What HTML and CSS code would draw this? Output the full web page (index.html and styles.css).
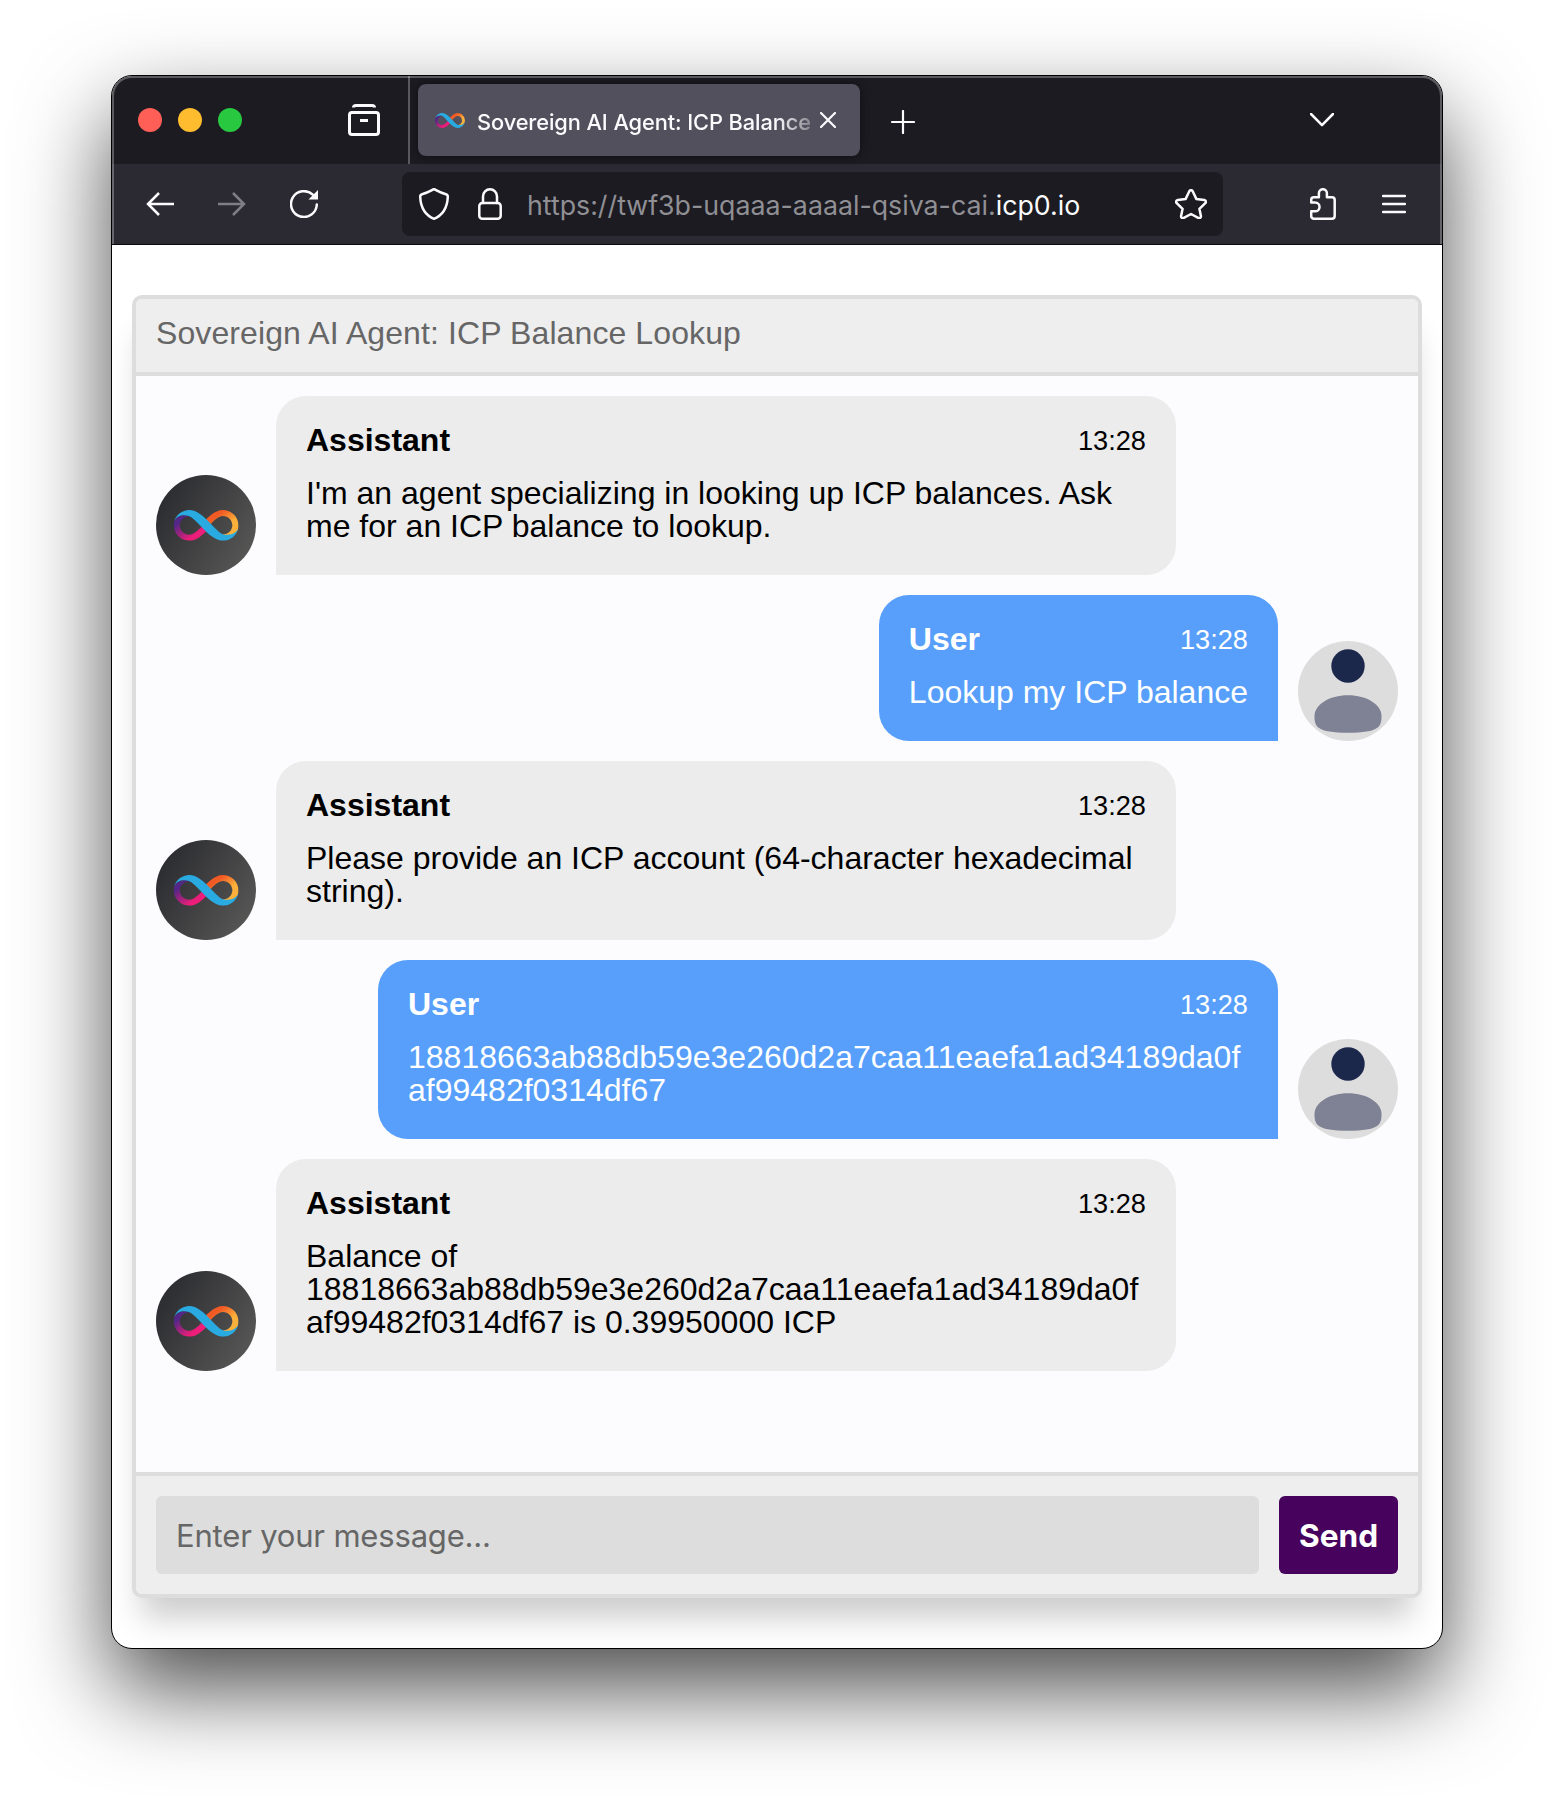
FILE: index.html
```html
<!DOCTYPE html>
<html lang="en">
<head>
<meta charset="utf-8">
<title>Sovereign AI Agent: ICP Balance Lookup</title>
<link rel="stylesheet" href="styles.css">
</head>
<body>
<svg width="0" height="0" class="defs" aria-hidden="true">
  <defs>
    <linearGradient id="warm" x1="0.25" y1="0.05" x2="0.95" y2="0.75"><stop offset="0.2" stop-color="#f15a24"/><stop offset="0.7" stop-color="#fbb03b"/></linearGradient>
    <linearGradient id="pink" x1="0.75" y1="0.95" x2="0.05" y2="0.25"><stop offset="0.2" stop-color="#ed1e79"/><stop offset="0.9" stop-color="#522785"/></linearGradient>
    <linearGradient id="disc" x1="0" y1="0.2" x2="1" y2="0.8"><stop offset="0" stop-color="#292a2e"/><stop offset="1" stop-color="#595857"/></linearGradient>
    <symbol id="infinity" viewBox="0 0 360 180" preserveAspectRatio="none">
      <path fill="url(#warm)" d="M271.6 0c-21.2 0-44.3 10.9-68.7 32.3-11.6 10.1-21.6 21-29.1 29.6l25 26.8c7.1-8.4 17.3-19.7 29-30.1 21.8-19.1 36-23.1 43.8-23.1 29.4 0 53.3 24.2 53.3 54.2 0 29.8-23.9 53.9-53.3 54.2-1.3 0-3-.2-5.2-.6 8.6 3.8 17.8 6.5 26.6 6.5 54 0 62.6-36.3 63.3-38.9 1.6-6.7 2.4-13.7 2.4-20.9C358.7 40.4 320.6 0 271.6 0z"/>
      <path fill="url(#pink)" d="M87.3 180c21.2 0 44.3-10.9 68.7-32.3 11.6-10.1 21.6-21 29.1-29.6l-25-26.8c-7.1 8.4-17.3 19.7-29 30.1-21.8 19.1-36 23.1-43.8 23.1C57.9 144.5 34 120.3 34 90.3c0-29.8 23.9-53.9 53.3-54.2 1.3 0 3 .2 5.2.6-8.6-3.8-17.8-6.5-26.6-6.5-54 0-62.6 36.3-63.3 38.9C1 75.8.2 82.800.2 90c0 49.600 38.100 90 87.100 90z"/>
      <path fill="#29abe2" d="M2.600 68.800C12 29 46.500 0 87.300 0 121 0 155.800 27.600 182.200 55.700L228 106c18 19 35 37.500 55 39 30 2 60-6 73.500-34C347 151 313 180 271.600 180c-34 0-70-29-95.500-56.300L130.500 74C114 56 101 41 87.300 36.100 60 26 16 28 2.600 68.800z"/>
    </symbol>
    <symbol id="bot" viewBox="0 0 100 100">
      <circle cx="50" cy="50" r="50" fill="url(#disc)"/>
      <use href="#infinity" x="17.700" y="35" width="65" height="30.700"/>
    </symbol>
    <symbol id="person" viewBox="0 0 100 100">
      <circle cx="50" cy="50" r="50" fill="#ddd"/>
      <circle cx="50" cy="25" r="16.700" fill="#1c274c"/>
      <path fill="#7f8295" d="M50 54.300c19 0 33.500 9.500 33.500 20.700 0 10.500-2 16.700-33.500 16.700S16.500 85.500 16.500 75C16.500 63.800 31 54.300 50 54.300z"/>
    </symbol>
  </defs>
</svg>

<div class="window">
  <header class="chrome">
    <div class="tabbar">
      <div class="lights"><i class="light red"></i><i class="light yellow"></i><i class="light green"></i></div>
      <svg class="icon list" viewBox="0 0 32 32"><path d="M5.500 3.500C5.500 2 6.500 1.500 8 1.500h16c1.500 0 2.500.5 2.500 2"/><rect x="1.500" y="8.500" width="29" height="22" rx="2.500"/><path d="M12 16.500h8"/></svg>
      <div class="divider"></div>
      <div class="tab">
        <svg class="favicon"><use href="#infinity" width="30" height="15"/></svg>
        <span class="tab-title">Sovereign AI Agent: ICP Balance</span>
        <svg class="icon close" viewBox="0 0 16 16"><path d="M1 1l14 14M15 1L1 15"/></svg>
      </div>
      <svg class="icon plus" viewBox="0 0 24 24"><path d="M12 1v22M1 12h22"/></svg>
      <svg class="icon chevron" viewBox="0 0 24 14"><path d="M1 1l11 11.200L23 1"/></svg>
    </div>
    <div class="toolbar">
      <svg class="icon back" viewBox="0 0 28 24"><path d="M1.500 12H28M13 1L2 12l11 11"/></svg>
      <svg class="icon forward" viewBox="0 0 28 24"><path d="M0 12h26.500M15 1l11 11-11 11"/></svg>
      <svg class="icon reload" viewBox="0 0 28 28"><path d="M26.800 14.500A12.900 12.900 0 1 1 22.800 4.700"/><path class="solid" d="M28 0v9.500H18.500z"/></svg>
      <div class="urlbar">
        <svg class="icon shield" viewBox="0 0 30 32"><path d="M15 1.200C16.500 1.200 18 3.500 27 6.200c1.500.5 1.900 1.200 1.800 2.500C28.300 20 24 27 15 30.800 6 27 1.700 20 1.200 8.700 1.100 7.400 1.500 6.700 3 6.200 12 3.500 13.500 1.200 15 1.200z"/></svg>
        <svg class="icon lock" viewBox="0 0 24 32"><rect x="1.300" y="15" width="21.400" height="15.700" rx="3"/><path d="M5 15V8.500a7 7.200 0 0 1 14 0V15"/></svg>
        <span class="url">https://twf3b-uqaaa-aaaal-qsiva-cai.<b>icp0.io</b></span>
        <svg class="icon star" viewBox="0 0 32 30"><path d="M14.300 2.300c.7-1.500 2.700-1.500 3.400 0l3.600 7.600 8 1.100c1.600.2 2.100 2 1 3.100l-5.900 5.700 1.500 7.200c.3 1.600-1.300 2.700-2.700 1.900L16 25l-7.200 3.900c-1.400.8-3-.3-2.700-1.900l1.500-7.200L1.700 14.100c-1.100-1.100-.6-2.900 1-3.100l8-1.100z"/></svg>
      </div>
      <svg class="icon puzzle" viewBox="0 0 26 32"><path d="M1.200 14.500V12c0-1.700 1-2.700 2.700-2.700h5V5.200a4 4 0 0 1 8 0v4.100h5c1.700 0 2.800 1 2.800 2.700v16c0 1.700-1.100 2.700-2.800 2.700H3.900c-1.700 0-2.700-1-2.700-2.700v-4.700h4a4.300 4.300 0 0 0 0-8.700z"/></svg>
      <svg class="icon menu" viewBox="0 0 24 20"><path d="M1 2h22M1 10h22M1 18h22"/></svg>
    </div>
  </header>

  <main class="page">
    <section class="chat">
      <div class="chat-header"><span class="chat-title">Sovereign AI Agent: ICP Balance Lookup</span></div>
      <div class="messages">
        <article class="msg">
          <svg class="avatar"><use href="#bot"/></svg>
          <div class="bubble">
            <div class="info"><span class="name">Assistant</span><span class="time">13:28</span></div>
            <div class="text">I'm an agent specializing in looking up ICP balances. Ask me for an ICP balance to lookup.</div>
          </div>
        </article>
        <article class="msg user">
          <svg class="avatar"><use href="#person"/></svg>
          <div class="bubble">
            <div class="info"><span class="name">User</span><span class="time">13:28</span></div>
            <div class="text">Lookup my ICP balance</div>
          </div>
        </article>
        <article class="msg">
          <svg class="avatar"><use href="#bot"/></svg>
          <div class="bubble">
            <div class="info"><span class="name">Assistant</span><span class="time">13:28</span></div>
            <div class="text">Please provide an ICP account (64-character hexadecimal string).</div>
          </div>
        </article>
        <article class="msg user">
          <svg class="avatar"><use href="#person"/></svg>
          <div class="bubble">
            <div class="info"><span class="name">User</span><span class="time">13:28</span></div>
            <div class="text">18818663ab88db59e3e260d2a7caa11eaefa1ad34189da0f<wbr>af99482f0314df67</div>
          </div>
        </article>
        <article class="msg">
          <svg class="avatar"><use href="#bot"/></svg>
          <div class="bubble">
            <div class="info"><span class="name">Assistant</span><span class="time">13:28</span></div>
            <div class="text">Balance of 18818663ab88db59e3e260d2a7caa11eaefa1ad34189da0f<wbr>af99482f0314df67 is 0.39950000 ICP</div>
          </div>
        </article>
      </div>
      <div class="composer">
        <div class="field">Enter your message...</div>
        <button class="send">Send</button>
      </div>
    </section>
  </main>
</div>
</body>
</html>
```
FILE: styles.css
```css
* { box-sizing: border-box; }

body {
  margin: 0;
  min-height: 1796px;
  padding: 75px 111px 0;
  background: #fff;
  font-family: "Liberation Sans", Arial, sans-serif;
  overflow: hidden;
}

.defs { position: absolute; }

.window {
  display: flex;
  flex-direction: column;
  height: 1574px;
  border: 1px solid #000;
  border-radius: 21px;
  background: #fff;
  overflow: hidden;
  box-shadow: 0 40px 90px rgba(0, 0, 0, .7);
}

/* Browser chrome */
.chrome {
  position: relative;
  height: 169px;
  border-bottom: 1px solid #0c0c0d;
  font-family: Inter, sans-serif;
}

.chrome::after {
  content: "";
  position: absolute;
  inset: 0;
  border: 2px solid rgba(255, 255, 255, .28);
  border-bottom: 0;
  border-radius: 20px 20px 0 0;
}

.tabbar {
  display: flex;
  align-items: center;
  height: 88px;
  padding: 0 108px 0 26px;
  background: #1c1b22;
}

.lights { display: flex; gap: 16px; }
.light { width: 24px; height: 24px; border-radius: 50%; }
.red { background: #ff5f57; }
.yellow { background: #febc2e; }
.green { background: #28c840; }

.icon {
  flex: none;
  fill: none;
  stroke: #fbfbfe;
  stroke-width: 2.5;
  stroke-linecap: round;
  stroke-linejoin: round;
}
.icon .solid { fill: #fbfbfe; stroke: none; }

.list { width: 32px; height: 32px; margin-left: 106px; stroke-width: 3; stroke-linecap: butt; }
.divider { width: 2px; height: 88px; margin-left: 28px; background: #5a5960; }

.tab {
  display: flex;
  align-items: center;
  width: 442px;
  height: 72px;
  margin-left: 8px;
  padding-left: 17px;
  border-radius: 8px;
  background: #52505c;
  box-shadow: 0 0 8px rgba(0, 0, 0, .5);
}

.favicon { width: 30px; height: 15px; }

.tab-title {
  width: 337px;
  margin: 4px 0 0 12px;
  color: #fbfbfe;
  font-size: 21.8px;
  font-weight: 500;
  letter-spacing: -.1px;
  white-space: nowrap;
  overflow: hidden;
  -webkit-mask-image: linear-gradient(to right, #000 300px, transparent 350px);
  mask-image: linear-gradient(to right, #000 300px, transparent 350px);
}

.close { width: 16px; height: 16px; margin-left: 6px; stroke-width: 2.2; }
.plus { width: 24px; height: 24px; margin: 3px 0 0 31px; stroke-width: 2.2; }
.chevron { width: 24px; height: 14px; margin-left: auto; }

.toolbar {
  display: flex;
  align-items: center;
  height: 80px;
  padding: 0 36px 0 34px;
  background: #2b2a33;
}

.back, .forward { width: 28px; height: 24px; stroke-linecap: butt; stroke-linejoin: miter; }
.forward { margin-left: 44px; opacity: .4; }
.reload { width: 28px; height: 28px; margin-left: 44px; }

.urlbar {
  display: flex;
  align-items: center;
  width: 821px;
  height: 64px;
  margin-left: 84px;
  padding: 0 16px 0 17px;
  border-radius: 8px;
  background: #1c1b22;
}

.shield { width: 30px; height: 32px; }
.lock { width: 24px; height: 32px; margin-left: 29px; }
.url {
  margin: 2px 0 0 25px;
  color: #8f8f94;
  font-size: 26.75px;
  white-space: nowrap;
}
.url b { color: #fbfbfe; font-weight: 400; }
.star { width: 32px; height: 30px; margin-left: auto; }
.puzzle { width: 26px; height: 32px; margin-left: 87px; }
.menu { width: 24px; height: 20px; margin-left: auto; stroke-width: 2.3; }

/* Chat card */
.page { flex: 1; padding: 50px 20px; }

.chat {
  display: flex;
  flex-direction: column;
  height: 1303px;
  border: 4px solid #ddd;
  border-radius: 10px;
  background: #fcfcfe;
  box-shadow: 0 30px 30px -10px rgba(0, 0, 0, .2);
  font-size: 32px;
  line-height: 33px;
}

.chat-header {
  padding: 18px 20px 22px;
  border-bottom: 4px solid #ddd;
  border-radius: 6px 6px 0 0;
  background: #eee;
  color: #666;
}
.chat-title { letter-spacing: .1px; }

.messages {
  display: flex;
  flex: 1;
  flex-direction: column;
  gap: 20px;
  padding: 20px;
}

.msg { display: flex; align-items: flex-end; gap: 20px; }
.user { flex-direction: row-reverse; }
.avatar { flex: none; width: 100px; height: 100px; }

.bubble {
  max-width: 900px;
  padding: 28px 30px 32px;
  border-radius: 30px 30px 30px 0;
  background: #ececec;
  color: #000;
}

.user .bubble {
  border-radius: 30px 30px 0 30px;
  background: #579ffb;
  color: #fff;
}

.info {
  display: flex;
  align-items: center;
  justify-content: space-between;
  margin-bottom: 20px;
}
.name { font-weight: 700; }
.time { font-size: 27.2px; }

.composer {
  display: flex;
  gap: 20px;
  padding: 20px;
  border-top: 4px solid #ddd;
  border-radius: 0 0 6px 6px;
  background: #eee;
  font-family: Inter, sans-serif;
}

.field {
  display: flex;
  flex: 1;
  align-items: center;
  height: 78px;
  padding: 0 20px;
  border-radius: 6px;
  background: #ddd;
  color: #666;
  font-size: 31px;
  letter-spacing: -.18px;
}

.send {
  width: 119px;
  padding: 0;
  border: 0;
  border-radius: 6px;
  background: #46025c;
  color: #fff;
  font: 700 31.6px Inter, sans-serif;
}
```
